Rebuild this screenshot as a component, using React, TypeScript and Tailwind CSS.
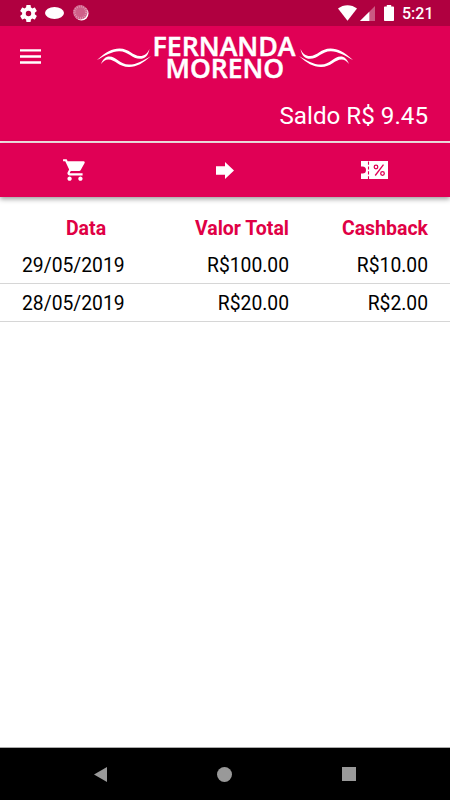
import type { ReactNode } from "react";

type Purchase = {
  date: string;
  total: string;
  cashback: string;
};

const purchases: readonly Purchase[] = [
  { date: "29/05/2019", total: "R$100.00", cashback: "R$10.00" },
  { date: "28/05/2019", total: "R$20.00", cashback: "R$2.00" },
];

function StatusBar() {
  return (
    <div className="flex h-[26px] shrink-0 items-center bg-[#b00040] pr-[18px] pl-5 text-white">
      <svg className="size-[17px]" viewBox="2 2 20 20" fill="currentColor" aria-hidden>
        <path d="M19.43 12.98c.04-.32.07-.64.07-.98s-.03-.66-.07-.98l2.11-1.65c.19-.15.24-.42.12-.64l-2-3.46c-.12-.22-.39-.3-.61-.22l-2.49 1c-.52-.4-1.08-.73-1.69-.98l-.38-2.65C14.46 2.18 14.25 2 14 2h-4c-.25 0-.46.18-.49.42l-.38 2.65c-.61.25-1.17.59-1.69.98l-2.49-1c-.23-.09-.49 0-.61.22l-2 3.46c-.13.22-.07.49.12.64l2.11 1.65c-.04.32-.07.65-.07.98s.03.66.07.98l-2.11 1.65c-.19.15-.24.42-.12.64l2 3.46c.12.22.39.3.61.22l2.49-1c.52.4 1.08.73 1.69.98l.38 2.65c.03.24.24.42.49.42h4c.25 0 .46-.18.49-.42l.38-2.65c.61-.25 1.17-.59 1.69-.98l2.49 1c.23.09.49 0 .61-.22l2-3.46c.12-.22.07-.49-.12-.64l-2.11-1.65zM12 15.200a3.200 3.200 0 1 1 0-6.400 3.200 3.200 0 0 1 0 6.400z" />
      </svg>
      <span className="ml-2 h-3 w-[19px] rounded-[50%] bg-white" />
      <svg className="ml-[9px] size-4" viewBox="0 0 16 16" aria-hidden>
        <circle cx="8.500" cy="8.500" r="7" fill="#fff" />
        <circle cx="7.300" cy="7.300" r="7.200" fill="#cf5f88" />
        <circle
          cx="7.300"
          cy="7.300"
          r="5.800"
          fill="none"
          stroke="#e39ab5"
          strokeWidth="2.200"
          strokeDasharray="0.800 1.300"
        />
      </svg>
      <svg className="ml-auto h-4 w-[19px]" viewBox="0 0 19 16" fill="currentColor" aria-hidden>
        <path d="M0 3.600C5.500-.9 13.500-.9 19 3.600L9.500 15.700z" />
      </svg>
      <svg className="ml-[3px] size-[15px]" viewBox="0 0 15 15" fill="currentColor" aria-hidden>
        <path d="M15 0v15H0z" opacity=".35" />
        <path d="M9.300 5.700V15H0z" />
      </svg>
      <svg className="ml-[9px] h-4 w-2.5" viewBox="0 0 10 16" fill="currentColor" aria-hidden>
        <path d="M2.800 0h4.400v1.500h2c.5 0 .8.300.8.800v12.900c0 .5-.3.800-.8.800H.8c-.5 0-.8-.3-.8-.8V2.300c0-.5.300-.8.800-.8h2z" />
      </svg>
      <span className="mt-0.5 ml-2 w-[30px] text-[16px] leading-none font-medium whitespace-nowrap">
        5:21
      </span>
    </div>
  );
}

function Swoosh() {
  return (
    <>
      <path d="M0 24C9 16 15 12.500 22.500 12.500C32 12.500 36 20 43 20C47.500 20 50.500 17.500 52.500 13C51 20 48 22.800 43 22.800C35 22.800 31 15 22 15.200C15 15.400 8 19.500 0 24z" />
      <path d="M4 28C6 23 8.500 20.500 12.500 20.500C19 20.500 23 28.600 32 28.600C40 28.600 46 24.500 54 20C46 27 40 31 32 31C22 31 18 23.500 11.500 23.500C8.500 23.500 6 25.500 4 28z" />
    </>
  );
}

function Logo() {
  return (
    <svg
      className="h-[50px] w-64"
      viewBox="0 0 256 50"
      overflow="visible"
      fill="#fff"
      fontFamily="'Open Sans', 'Noto Sans', sans-serif"
      fontSize="27.500"
      fontWeight="600"
    >
      <Swoosh />
      <g transform="translate(256 0) scale(-1 1)">
        <Swoosh />
      </g>
      <g stroke="#fff" strokeWidth=".5">
        <text x="55.500" y="20" textLength="143" lengthAdjust="spacingAndGlyphs">
          FERNANDA
        </text>
        <text x="68.500" y="41.500" textLength="118.500" lengthAdjust="spacingAndGlyphs">
          MORENO
        </text>
      </g>
    </svg>
  );
}

function Header() {
  return (
    <header className="h-[117px] shrink-0 border-b-2 border-[#f6e3e6] bg-[#e00055] text-white">
      <div className="flex h-[62px] items-start">
        <button type="button" className="mt-[23px] ml-5" aria-label="Menu">
          <svg className="block h-[15px] w-[21px]" viewBox="0 0 21 15" fill="currentColor">
            <path d="M0 .2h21v2.400H0zM0 6.300h21v2.400H0zM0 12.300h21v2.400H0z" />
          </svg>
        </button>
        <div className="mt-2.5 ml-14">
          <Logo />
        </div>
      </div>
      <p className="mt-3 pr-[22px] text-right text-[24.200px] leading-8">Saldo R$ 9.45</p>
    </header>
  );
}

function Tab({ label, children }: { label: string; children: ReactNode }) {
  return (
    <button type="button" className="flex items-center justify-center" aria-label={label}>
      {children}
    </button>
  );
}

function Tabs() {
  return (
    <nav className="z-10 grid h-[54px] shrink-0 grid-cols-3 bg-[#e00055] text-white shadow-[0_2px_5px_rgba(0,0,0,0.4)]">
      <Tab label="Compras">
        <svg className="size-[26px]" viewBox="0 0 24 24" fill="currentColor">
          <path d="M7 18c-1.100 0-1.990.9-1.990 2S5.900 22 7 22s2-.9 2-2-.9-2-2-2zM1 2v2h2l3.600 7.590-1.350 2.450c-.16.280-.25.610-.25.960 0 1.100.9 2 2 2h12v-2H7.420c-.14 0-.25-.11-.25-.25l.03-.12.900-1.630h7.450c.75 0 1.410-.41 1.750-1.030l3.580-6.490A1 1 0 0 0 20 4H5.210l-.94-2H1zm16 16c-1.100 0-1.990.9-1.990 2s.89 2 1.990 2 2-.9 2-2-.9-2-2-2z" />
        </svg>
      </Tab>
      <Tab label="Transferir">
        <svg className="h-[17px] w-[18px]" viewBox="0 0 18 17" fill="currentColor">
          <path d="M0 4.300h9V0l9 8.500L9 17v-4.300H0z" />
        </svg>
      </Tab>
      <Tab label="Cupons">
        <svg className="mr-0.5 h-[18px] w-[27px]" viewBox="0 0 27 18">
          <path fill="currentColor" d="M0 0h27v18H0v-5.500h1.500a3.500 3.500 0 0 0 0-7H0z" />
          <g fill="none" stroke="#e00055">
            <path d="M7.500 0v18" strokeWidth="1.100" strokeDasharray="3.200 1.700" strokeDashoffset="-.5" />
            <circle cx="15" cy="6" r="1.800" strokeWidth="1.300" />
            <circle cx="21.500" cy="12.500" r="1.800" strokeWidth="1.300" />
            <path d="M22.500 3.700l-8.300 10.800" strokeWidth="1.300" />
          </g>
        </svg>
      </Tab>
    </nav>
  );
}

function PurchaseTable() {
  return (
    <main className="flex-1 bg-white pt-[15px] text-[19.300px] leading-6">
      <div className="flex h-[34px] items-center pr-[22px] text-[19.500px] font-bold text-[#e00045]">
        <span className="w-[172px] text-center">Data</span>
        <span className="w-[117px] text-right whitespace-nowrap">Valor Total</span>
        <span className="flex-1 text-right">Cashback</span>
      </div>
      {purchases.map((item) => (
        <div
          key={item.date}
          className="flex h-[38px] items-center border-b border-[#d6d6d6] px-[22px] pt-0.5 text-black"
        >
          <span className="w-[150px]">{item.date}</span>
          <span className="w-[117px] text-right">{item.total}</span>
          <span className="flex-1 text-right">{item.cashback}</span>
        </div>
      ))}
    </main>
  );
}

function NavigationBar() {
  return (
    <footer className="flex h-[53px] shrink-0 items-center justify-between border-t border-[#aaa] bg-black pr-[94px] pl-[94px] text-[#999]">
      <svg className="h-[15px] w-[13px]" viewBox="0 0 13 15" fill="currentColor" aria-hidden>
        <path d="M13 0v15L0 7.500z" />
      </svg>
      <span className="size-[15px] rounded-full bg-[#999]" />
      <span className="size-3.5 bg-[#999]" />
    </footer>
  );
}

export default function App() {
  return (
    <div className="flex h-[800px] w-[450px] flex-col overflow-hidden bg-white font-[Roboto,sans-serif]">
      <StatusBar />
      <Header />
      <Tabs />
      <PurchaseTable />
      <NavigationBar />
    </div>
  );
}
